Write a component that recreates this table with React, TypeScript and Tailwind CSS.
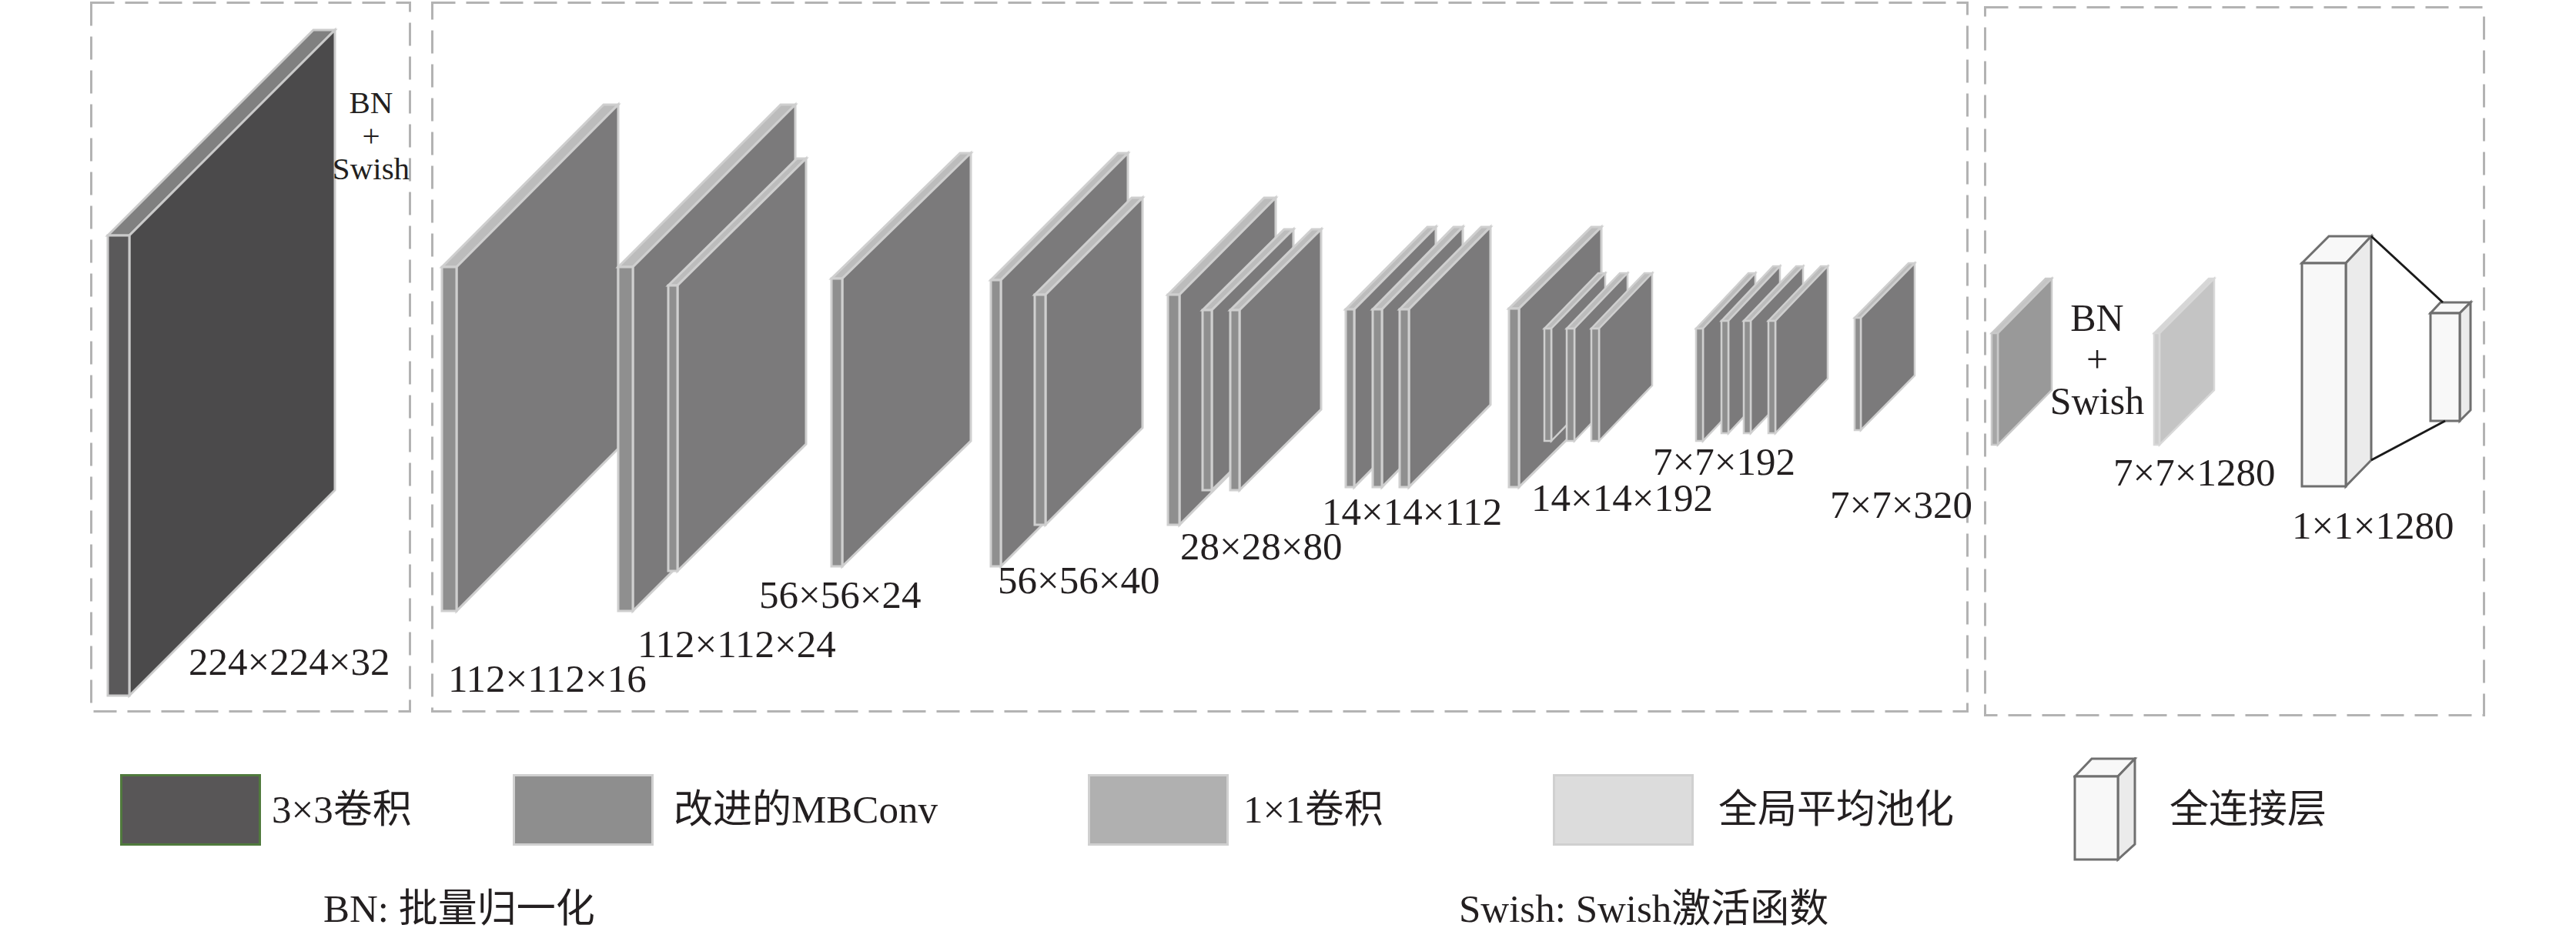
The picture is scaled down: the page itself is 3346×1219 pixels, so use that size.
import type { ReactNode } from "react";

// 3D slab: thin front strip at (x, y) of width t and height h, face receding by (dx, dy)
type Slab = { x: number; y: number; t: number; h: number; dx: number; dy: number };

type Tone = { face: string; side: string; top: string; stroke: string };

const conv: Tone = { face: "#4b4a4b", side: "#5a595a", top: "#808080", stroke: "#cbcbcb" };
const mb: Tone = { face: "#7b7a7b", side: "#8f8f8f", top: "#bcbcbc", stroke: "#cfcfcf" };
const pw: Tone = { face: "#999999", side: "#a6a6a6", top: "#c4c4c4", stroke: "#c9c9c9" };
const pool: Tone = { face: "#c4c4c4", side: "#cdcdcd", top: "#d6d6d6", stroke: "#d8d8d8" };

const Plate = ({ s, tone, sw = 3 }: { s: Slab; tone: Tone; sw?: number }) => {
  const { x, y, t, h, dx, dy } = s;
  const r = x + t;
  return (
    <g stroke={tone.stroke} strokeWidth={sw} strokeLinejoin="miter">
      <polygon points={`${x},${y} ${r},${y} ${r + dx},${y - dy} ${x + dx},${y - dy}`} fill={tone.top} />
      <polygon points={`${r},${y} ${r + dx},${y - dy} ${r + dx},${y - dy + h} ${r},${y + h}`} fill={tone.face} />
      <rect x={x} y={y} width={t} height={h} fill={tone.side} />
    </g>
  );
};

const middlePlates: { s: Slab; sw?: number }[] = [
  { s: { x: 574, y: 347, t: 19, h: 447, dx: 210, dy: 211 } },
  { s: { x: 803, y: 347, t: 19, h: 447, dx: 211, dy: 211 } },
  { s: { x: 868, y: 371, t: 12, h: 371, dx: 167, dy: 165 } },
  { s: { x: 1080, y: 362, t: 14, h: 374, dx: 167, dy: 163 } },
  { s: { x: 1287, y: 364, t: 13, h: 372, dx: 165, dy: 165 } },
  { s: { x: 1344, y: 383, t: 14, h: 299, dx: 126, dy: 126 } },
  { s: { x: 1517, y: 383, t: 15, h: 299, dx: 125, dy: 126 } },
  { s: { x: 1562, y: 403, t: 12, h: 234, dx: 106, dy: 105 } },
  { s: { x: 1598, y: 403, t: 12, h: 234, dx: 106, dy: 105 } },
  { s: { x: 1748, y: 402, t: 11, h: 231, dx: 106, dy: 107 } },
  { s: { x: 1783, y: 402, t: 12, h: 231, dx: 105, dy: 107 } },
  { s: { x: 1818, y: 402, t: 12, h: 231, dx: 106, dy: 107 } },
  { s: { x: 1960, y: 401, t: 13, h: 232, dx: 107, dy: 106 } },
  { s: { x: 2006, y: 427, t: 9, h: 146, dx: 70, dy: 72 }, sw: 2.5 },
  { s: { x: 2035, y: 427, t: 10, h: 146, dx: 69, dy: 72 }, sw: 2.5 },
  { s: { x: 2067, y: 427, t: 10, h: 146, dx: 69, dy: 72 }, sw: 2.5 },
  { s: { x: 2203, y: 427, t: 9, h: 146, dx: 68, dy: 72 }, sw: 2.5 },
  { s: { x: 2236, y: 417, t: 9, h: 146, dx: 67, dy: 71 }, sw: 2.5 },
  { s: { x: 2265, y: 417, t: 9, h: 146, dx: 68, dy: 71 }, sw: 2.5 },
  { s: { x: 2297, y: 417, t: 9, h: 146, dx: 68, dy: 71 }, sw: 2.5 },
  { s: { x: 2409, y: 413, t: 8, h: 146, dx: 70, dy: 71 }, sw: 2.5 },
];

const Frame = ({ x, y, w, h }: { x: number; y: number; w: number; h: number }) => (
  <rect
    x={x + 1.5}
    y={y + 1.5}
    width={w - 3}
    height={h - 3}
    fill="none"
    stroke="#b3b3b3"
    strokeWidth={3}
    strokeDasharray="30 14"
  />
);

const Label = ({ className, children }: { className: string; children: ReactNode }) => (
  <span className={`absolute whitespace-nowrap text-[51px] leading-none ${className}`}>{children}</span>
);

const Swatch = ({ className }: { className: string }) => (
  <div className={`w-[183px] h-[93px] border-[3px] ${className}`}></div>
);

const FcIcon = () => (
  <svg width="84" height="136" viewBox="2693 984 84 136" className="shrink-0">
    <g stroke="#707070" strokeWidth="3" strokeLinejoin="miter">
      <polygon points="2695,1009 2751,1009 2773,986 2717,986" fill="#f8f8f8" />
      <polygon points="2751,1009 2773,986 2773,1097 2751,1117" fill="#ebebeb" />
      <rect x="2695" y="1009" width="56" height="108" fill="#f8f8f8" />
    </g>
  </svg>
);

const App = (): JSX.Element => {
  return (
    <div className="w-[3346px] h-[1219px] bg-white overflow-hidden text-[#231f20] font-['Liberation_Serif','Noto_Sans_CJK_SC',serif]">
      {/* Network stages */}
      <div className="flex items-start pl-[117px]">
        {/* Stem: 3x3 conv */}
        <div className="relative mt-[2px] w-[417px] h-[924px] shrink-0">
          <svg className="absolute inset-0" width="417" height="924" viewBox="117 2 417 924">
            <Frame x={117} y={2} w={417} h={924} />
            <Plate s={{ x: 140, y: 306, t: 28, h: 598, dx: 267, dy: 267 }} tone={conv} />
          </svg>
          <div className="absolute left-[305px] top-[110px] w-[120px] text-center text-[41px] leading-[43px]">
            <div>BN</div>
            <div>+</div>
            <div>Swish</div>
          </div>
          <Label className="left-[128px] top-[833px]">224×224×32</Label>
        </div>

        {/* MBConv blocks */}
        <div className="relative ml-[26px] mt-[2px] w-[1997px] h-[924px] shrink-0">
          <svg className="absolute inset-0" width="1997" height="924" viewBox="560 2 1997 924">
            <Frame x={560} y={2} w={1997} h={924} />
            {middlePlates.map((p, i) => (
              <Plate key={i} s={p.s} tone={mb} sw={p.sw} />
            ))}
          </svg>
          <Label className="left-[22px] top-[855px]">112×112×16</Label>
          <Label className="left-[268px] top-[810px]">112×112×24</Label>
          <Label className="left-[426px] top-[746px]">56×56×24</Label>
          <Label className="left-[736px] top-[727px]">56×56×40</Label>
          <Label className="left-[973px] top-[683px]">28×28×80</Label>
          <Label className="left-[1157px] top-[638px]">14×14×112</Label>
          <Label className="left-[1429px] top-[620px]">14×14×192</Label>
          <Label className="left-[1587px] top-[573px]">7×7×192</Label>
          <Label className="left-[1817px] top-[629px]">7×7×320</Label>
        </div>

        {/* Head: 1x1 conv, pooling, FC */}
        <div className="relative ml-[20px] mt-[8px] w-[651px] h-[923px] shrink-0">
          <svg className="absolute inset-0" width="651" height="923" viewBox="2577 8 651 923">
            <Frame x={2577} y={8} w={651} h={923} />
            <Plate s={{ x: 2587, y: 433, t: 8, h: 145, dx: 70, dy: 71 }} tone={pw} sw={2.5} />
            <Plate s={{ x: 2798, y: 433, t: 7, h: 145, dx: 71, dy: 71 }} tone={pool} sw={2.5} />
            <g stroke="#6f6f6f" strokeWidth="3" strokeLinejoin="miter">
              <polygon points="2990,342 3047,342 3080,307 3025,307" fill="#f8f8f8" />
              <polygon points="3047,342 3080,307 3080,598 3047,632" fill="#ebebeb" />
              <rect x="2990" y="342" width="57" height="290" fill="#f8f8f8" />
              <polygon points="3157,407 3195,407 3209,393 3170,393" fill="#f8f8f8" />
              <polygon points="3195,407 3209,393 3209,533 3195,547" fill="#ebebeb" />
              <rect x="3157" y="407" width="38" height="140" fill="#f8f8f8" />
            </g>
            <line x1="3080" y1="307" x2="3173" y2="393" stroke="#1a1a1a" strokeWidth="3" />
            <line x1="3080" y1="598" x2="3176" y2="547" stroke="#1a1a1a" strokeWidth="3" />
          </svg>
          <div className="absolute left-[67px] top-[378px] w-[160px] text-center text-[50px] leading-[54px]">
            <div>BN</div>
            <div>+</div>
            <div>Swish</div>
          </div>
          <Label className="left-[168px] top-[581px]">7×7×1280</Label>
          <Label className="left-[400px] top-[650px]">1×1×1280</Label>
        </div>
      </div>

      {/* Legend */}
      <div className="flex items-center mt-[54px] h-[134px] pl-[156px] text-[51px] leading-none">
        <div className="flex items-center gap-[14px] w-[510px] shrink-0">
          <Swatch className="border-[#507a3d] bg-[#585657]" />
          <span>3×3卷积</span>
        </div>
        <div className="flex items-center gap-[26px] w-[747px] shrink-0">
          <Swatch className="border-[#d0d0d0] bg-[#8e8e8e]" />
          <span>改进的MBConv</span>
        </div>
        <div className="flex items-center gap-[19px] w-[604px] shrink-0">
          <Swatch className="border-[#d0d0d0] bg-[#b0b0b0]" />
          <span>1×1卷积</span>
        </div>
        <div className="flex items-center gap-[32px] w-[676px] shrink-0">
          <Swatch className="border-[#d0d0d0] bg-[#dcdcdc]" />
          <span>全局平均池化</span>
        </div>
        <div className="flex items-center gap-[41px] shrink-0">
          <FcIcon />
          <span>全连接层</span>
        </div>
      </div>

      {/* Notes */}
      <div className="flex mt-[37px] pl-[420px] text-[51px] leading-none">
        <span className="w-[1475px] shrink-0">BN: 批量归一化</span>
        <span>Swish: Swish激活函数</span>
      </div>
    </div>
  );
};

export default App;
